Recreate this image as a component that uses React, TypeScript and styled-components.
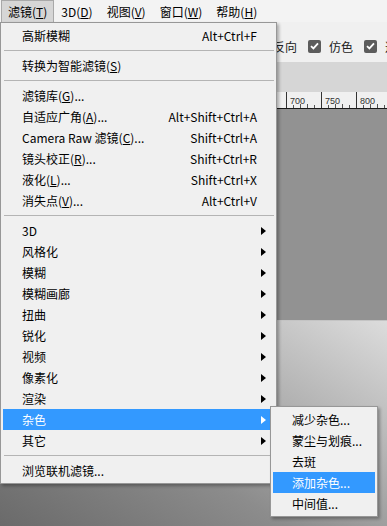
import React from 'react';
import styled, { createGlobalStyle } from 'styled-components';

const GlobalStyle = createGlobalStyle`
  html, body {
    margin: 0;
    padding: 0;
  }
  body {
    width: 387px;
    height: 526px;
    overflow: hidden;
    font-family: "Noto Sans CJK SC", "Noto Sans", sans-serif;
    font-size: 12px;
    color: #000;
  }
`;

type Entry =
  | { kind: 'sep' }
  | { kind: 'item'; label: React.ReactNode; shortcut?: string; sub?: boolean; active?: boolean };

const U = ({ c }: { c: string }) => <u>{c}</u>;

const filterMenu: Entry[] = [
  { kind: 'item', label: '高斯模糊', shortcut: 'Alt+Ctrl+F' },
  { kind: 'sep' },
  { kind: 'item', label: <>转换为智能滤镜(<U c="S" />)</> },
  { kind: 'sep' },
  { kind: 'item', label: <>滤镜库(<U c="G" />)...</> },
  { kind: 'item', label: <>自适应广角(<U c="A" />)...</>, shortcut: 'Alt+Shift+Ctrl+A' },
  { kind: 'item', label: <>Camera Raw 滤镜(<U c="C" />)...</>, shortcut: 'Shift+Ctrl+A' },
  { kind: 'item', label: <>镜头校正(<U c="R" />)...</>, shortcut: 'Shift+Ctrl+R' },
  { kind: 'item', label: <>液化(<U c="L" />)...</>, shortcut: 'Shift+Ctrl+X' },
  { kind: 'item', label: <>消失点(<U c="V" />)...</>, shortcut: 'Alt+Ctrl+V' },
  { kind: 'sep' },
  { kind: 'item', label: '3D', sub: true },
  { kind: 'item', label: '风格化', sub: true },
  { kind: 'item', label: '模糊', sub: true },
  { kind: 'item', label: '模糊画廊', sub: true },
  { kind: 'item', label: '扭曲', sub: true },
  { kind: 'item', label: '锐化', sub: true },
  { kind: 'item', label: '视频', sub: true },
  { kind: 'item', label: '像素化', sub: true },
  { kind: 'item', label: '渲染', sub: true },
  { kind: 'item', label: '杂色', sub: true, active: true },
  { kind: 'item', label: '其它', sub: true },
  { kind: 'sep' },
  { kind: 'item', label: '浏览联机滤镜...' },
];

const noiseMenu: Entry[] = [
  { kind: 'item', label: '减少杂色...' },
  { kind: 'item', label: '蒙尘与划痕...' },
  { kind: 'item', label: '去斑' },
  { kind: 'item', label: '添加杂色...', active: true },
  { kind: 'item', label: '中间值...' },
];

const Arrow = ({ color }: { color: string }) => (
  <svg width="5" height="8" viewBox="0 0 5 8">
    <path d="M0 0 L5 4 L0 8 Z" fill={color} />
  </svg>
);

const CheckMark = () => (
  <svg width="9" height="8" viewBox="0 0 9 8">
    <path d="M1 4.2 L3.4 6.4 L8 1.4" fill="none" stroke="#fff" strokeWidth="1.8" />
  </svg>
);

function renderEntries(entries: Entry[]) {
  return entries.map((e, i) =>
    e.kind === 'sep' ? (
      <Separator key={i} />
    ) : (
      <Item key={i} $active={e.active}>
        <span>{e.label}</span>
        {e.shortcut && <Shortcut>{e.shortcut}</Shortcut>}
        {e.sub && (
          <SubArrow>
            <Arrow color={e.active ? '#fff' : '#000'} />
          </SubArrow>
        )}
      </Item>
    )
  );
}

// only the part right of the open menu shows, so start the scale at 700
const Ruler = () => {
  const ticks: React.ReactNode[] = [];
  for (let n = 0; n <= 3; n++) {
    const x = 286 + n * 35;
    ticks.push(<line key={'M' + n} x1={x + 0.5} y1={0} x2={x + 0.5} y2={16} stroke="#333" />);
    ticks.push(
      <text key={'T' + n} x={x + 4} y={12} fontSize="9" fill="#333" fontFamily="'Liberation Sans', sans-serif">
        {700 + n * 50}
      </text>
    );
    for (let k = 1; k < 5; k++) {
      const mx = x + k * 7;
      ticks.push(
        <line key={'m' + n + k} x1={mx + 0.5} y1={k === 2 || k === 3 ? 12 : 13} x2={mx + 0.5} y2={16} stroke="#555" />
      );
    }
  }
  return (
    <RulerBar>
      <svg width="387" height="16">{ticks}</svg>
    </RulerBar>
  );
};

export default function App() {
  return (
    <Screen>
      <GlobalStyle />
      <MenuBar>
        <BarItem $open>
          滤镜(<U c="T" />)
        </BarItem>
        <BarItem>
          3D(<U c="D" />)
        </BarItem>
        <BarItem>
          视图(<U c="V" />)
        </BarItem>
        <BarItem>
          窗口(<U c="W" />)
        </BarItem>
        <BarItem>
          帮助(<U c="H" />)
        </BarItem>
      </MenuBar>
      <OptionsBar>
        <Option>反向</Option>
        <Option>
          <CheckBox>
            <CheckMark />
          </CheckBox>
          仿色
        </Option>
        <Option>
          <CheckBox>
            <CheckMark />
          </CheckBox>
          透明区域
        </Option>
      </OptionsBar>
      <TabBar />
      <Ruler />
      <Workspace />
      <Canvas />

      <FilterMenu>{renderEntries(filterMenu)}</FilterMenu>
      <NoiseMenu>{renderEntries(noiseMenu)}</NoiseMenu>
    </Screen>
  );
}

const Screen = styled.div`
  position: relative;
  width: 387px;
  height: 526px;
  overflow: hidden;
  display: flex;
  flex-direction: column;
  background: #919191;
`;

const MenuBar = styled.div`
  height: 22px;
  display: flex;
  align-items: stretch;
  background: #f3f3f3;
  padding-left: 1px;
`;

const BarItem = styled.div<{ $open?: boolean }>`
  display: flex;
  align-items: center;
  padding: 0 6px;
  white-space: nowrap;
  background: ${p => (p.$open ? '#d6d6d6' : 'transparent')};
  border: 1px solid ${p => (p.$open ? '#a9a9a9' : 'transparent')};
  border-bottom: none;
`;

const OptionsBar = styled.div`
  height: 40px;
  box-sizing: border-box;
  display: flex;
  align-items: center;
  gap: 11px;
  padding: 8px 0 0 273px;
  background: #f0f0f0;
  white-space: nowrap;
  overflow: hidden;
  font-size: 12px;
  color: #222;
`;

const Option = styled.div`
  display: flex;
  align-items: center;
  gap: 8px;
`;

const CheckBox = styled.span`
  width: 13px;
  height: 13px;
  border-radius: 2px;
  background: #5c5c5c;
  display: inline-flex;
  align-items: center;
  justify-content: center;
`;

const TabBar = styled.div`
  height: 30px;
  background: #d6d6d6;
`;

const RulerBar = styled.div`
  height: 16px;
  background: #f0f0f0;
  border-bottom: 1px solid #1a1a1a;
  svg {
    display: block;
  }
`;

const Workspace = styled.div`
  height: 211px;
  background: #929292;
`;

const Canvas = styled.div`
  flex: 1;
  border-top: 1px solid #c4c4c4;
  background: linear-gradient(212deg, #dcdcdc 0%, #b4b4b4 30%, #8c8c8c 60%, #6a6a6a 100%);
`;

const MenuPanel = styled.div`
  position: absolute;
  box-sizing: border-box;
  background: #f0f0f0;
  border: 1px solid #979797;
  padding: 2px 0;
  box-shadow: 2px 2px 3px rgba(0, 0, 0, 0.3);
`;

const FilterMenu = styled(MenuPanel)`
  left: 0;
  top: 22px;
  width: 277px;
`;

const NoiseMenu = styled(MenuPanel)`
  left: 270px;
  top: 406px;
  width: 108px;
`;

const Item = styled.div<{ $active?: boolean }>`
  height: 21px;
  display: flex;
  align-items: center;
  margin: 0 2px;
  padding: 0 17px 0 19px;
  white-space: nowrap;
  background: ${p => (p.$active ? '#3399ff' : 'transparent')};
  color: ${p => (p.$active ? '#fff' : '#000')};
`;

const Shortcut = styled.span`
  margin-left: auto;
`;

const SubArrow = styled.span`
  margin-left: auto;
  margin-right: -9px;
  display: flex;
`;

const Separator = styled.div`
  height: 9px;
  margin: 0 2px 0 3px;
  display: flex;
  flex-direction: column;
  justify-content: center;
  &::before {
    content: '';
    height: 1px;
    background: #b4b4b4;
  }
`;
